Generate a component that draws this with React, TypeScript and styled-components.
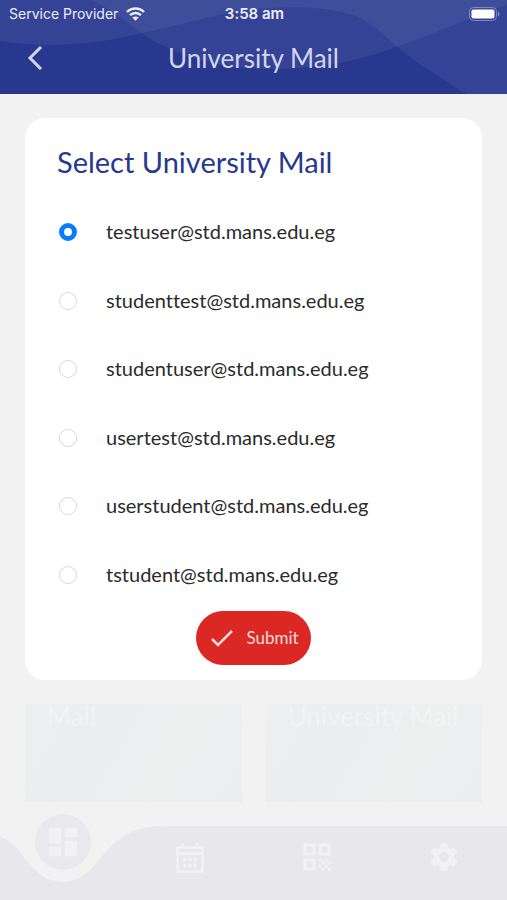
import React, { useState } from "react";
import styled, { createGlobalStyle } from "styled-components";
import { MdDashboard, MdQrCode, MdSettings } from "react-icons/md";

const GlobalStyle = createGlobalStyle`
  * { box-sizing: border-box; }
  body { margin: 0; background: #f2f2f2; font-family: Lato, "Open Sans", sans-serif; }
  button { font-family: inherit; border: 0; padding: 0; background: none; cursor: pointer; }
`;

const Screen = styled.div`
  min-height: 100vh;
  display: flex;
  flex-direction: column;
  background: #f2f2f2;
  font-variant-ligatures: none;
`;

const Header = styled.header`
  position: relative;
  height: 94px;
  background: #28388f;
  color: #d3d6ea;
  overflow: hidden;
`;

const Waves = styled.svg`
  position: absolute;
  inset: 0;
  width: 100%;
  height: 100%;
`;

const StatusBar = styled.div`
  position: relative;
  display: grid;
  grid-template-columns: 1fr auto 1fr;
  align-items: center;
  height: 28px;
  padding: 0 7px 0 9px;
  color: #eceef8;
  font-family: Inter, sans-serif;
  line-height: 20px;
`;

const Carrier = styled.div`
  display: flex;
  align-items: center;
  gap: 8px;
  font-size: 14px;
  white-space: nowrap;
`;

const Time = styled.time`
  font-size: 15px;
  font-weight: 600;
`;

const BatteryIcon = styled.svg`
  justify-self: end;
`;

const TitleBar = styled.div`
  position: relative;
  display: grid;
  grid-template-columns: 50px 1fr 50px;
  align-items: center;
  height: 60px;
  padding: 0 10px;
`;

const BackButton = styled.button`
  display: flex;
  align-items: center;
  justify-content: center;
  height: 48px;
  color: inherit;
`;

const PageTitle = styled.h1`
  margin: 0;
  text-align: center;
  font-size: 26px;
  line-height: 32px;
  font-weight: 400;
`;

const Main = styled.main`
  flex: 1;
  display: flex;
  flex-direction: column;
  gap: 24px;
  padding: 24px 25px;
`;

const Card = styled.form`
  display: flex;
  flex-direction: column;
  padding: 24px 32px 15px;
  border-radius: 20px;
  background: #fff;
`;

const CardTitle = styled.h2`
  margin: 0 0 16px;
  color: #28388f;
  font-size: 29px;
  line-height: 40px;
  font-weight: 400;
`;

const Options = styled.fieldset`
  margin: 0;
  padding: 0;
  border: 0;
`;

const Option = styled.label`
  display: flex;
  align-items: center;
  gap: 29px;
  height: 68px;
  color: #2b2b2b;
  font-size: 20px;
  line-height: 28px;
  cursor: pointer;
  &:nth-child(even) { height: 69px; }
`;

const OptionText = styled.span`
  padding-bottom: 2px;
`;

const Radio = styled.input`
  appearance: none;
  flex: none;
  width: 18px;
  height: 18px;
  margin: 0 0 0 2px;
  border: 1px solid #d9d9d9;
  border-radius: 50%;
  background: #fff;
  &:checked { border: 5px solid #0a7aff; }
`;

const SubmitButton = styled.button`
  align-self: center;
  display: flex;
  align-items: center;
  gap: 12px;
  height: 54px;
  margin-top: 2px;
  padding: 0 12px 0 14px;
  border-radius: 27px;
  background: #dc2825;
  color: #fbdcda;
  font-size: 17px;
  line-height: 24px;
`;

const Tiles = styled.div`
  display: grid;
  grid-template-columns: 1fr 1fr;
  gap: 24px;
`;

const Tile = styled.section`
  min-height: 98px;
  padding: 0 22px;
  background: linear-gradient(120deg, #eeefef, #ecedef 30%, #eeefef 65%, #ebeef0);
  color: #f2f3f3;
  font-size: 26px;
  line-height: 24px;
  white-space: nowrap;
`;

const NavBar = styled.nav`
  position: relative;
  display: grid;
  grid-template-columns: repeat(4, 1fr);
  height: 74px;
`;

const NavShape = styled.svg`
  position: absolute;
  left: 0;
  bottom: 0;
  width: 100%;
  height: 74px;
`;

const NavButton = styled.button<{ $active?: boolean }>`
  position: relative;
  display: flex;
  align-items: center;
  justify-content: center;
  justify-self: center;
  width: 56px;
  height: 56px;
  margin-top: ${(p) => (p.$active ? "-12px" : "3px")};
  border-radius: 50%;
  background: ${(p) => (p.$active ? "#e9e9ed" : "transparent")};
  color: #f2f2f5;
`;

const MAILS = [
  "testuser@std.mans.edu.eg",
  "studenttest@std.mans.edu.eg",
  "studentuser@std.mans.edu.eg",
  "usertest@std.mans.edu.eg",
  "userstudent@std.mans.edu.eg",
  "tstudent@std.mans.edu.eg",
];

function Wifi() {
  return (
    <svg width="19" height="14" viewBox="0 0 19 14" fill="none" stroke="currentColor" strokeWidth="2.4" aria-hidden="true">
      <path d="M1 5C5.6 .3 13.4 .3 18 5" />
      <path d="M4 8.2c3.2-3 7.8-3 11 0" />
      <path d="M9.5 13.7 6.4 10.6c1.8-1.6 4.4-1.6 6.2 0z" fill="currentColor" stroke="none" />
    </svg>
  );
}

function Battery() {
  return (
    <BatteryIcon width="31" height="14" viewBox="0 0 31 14" aria-label="Battery full">
      <rect x=".5" y=".5" width="27" height="13" rx="4" fill="none" stroke="#7f88bf" />
      <rect x="2.5" y="2.5" width="23" height="9" rx="2" fill="#fff" />
      <path d="M29 4.5c2 .8 2 4.2 0 5z" fill="#7f88bf" />
    </BatteryIcon>
  );
}

function Calendar() {
  return (
    <svg width="28" height="31" viewBox="0 0 28 31" fill="none" stroke="currentColor" strokeWidth="2.5" aria-hidden="true">
      <path d="M1.5 5.5h25v24h-25zM1.5 11.5h25M6.5 1v5M21.5 1v5" />
      <path d="M7 17.5h14M7 23.5h14" strokeWidth="3.5" strokeDasharray="3.5 1.75" />
    </svg>
  );
}

export default function App() {
  const [selected, setSelected] = useState(MAILS[0]);
  return (
    <Screen>
      <GlobalStyle />
      <Header>
        <Waves viewBox="0 0 507 94" preserveAspectRatio="none" aria-hidden="true">
          <g fill="#fff" fillOpacity=".06">
            <path d="M0 41C50 49 98 44 143 33C166 28 188 22 210 17C250 7 312 2 353 15C372 22 382 33 396 46C411 58 424 68 440 77C450 84 458 89 466 94H507V0H0Z" />
            <path d="M91 0C112 10 127 22 143 34C152 41 160 44 170 48C220 74 285 72 346 62C364 58 380 53 396 47C420 39 443 29 466 20C480 15 493 10 507 5V0Z" />
          </g>
        </Waves>
        <StatusBar>
          <Carrier>Service Provider <Wifi /></Carrier>
          <Time>3:58 am</Time>
          <Battery />
        </StatusBar>
        <TitleBar>
          <BackButton type="button" aria-label="Back">
            <svg width="16" height="24" viewBox="0 0 16 24" fill="none" stroke="currentColor" strokeWidth="3">
              <path d="M14 1 3 12l11 11" />
            </svg>
          </BackButton>
          <PageTitle>University Mail</PageTitle>
        </TitleBar>
      </Header>
      <Main>
        <Card onSubmit={(e) => e.preventDefault()}>
          <CardTitle id="mail-heading">Select University Mail</CardTitle>
          <Options aria-labelledby="mail-heading">
            {MAILS.map((mail) => (
              <Option key={mail}>
                <Radio type="radio" name="mail" value={mail} checked={selected === mail} onChange={() => setSelected(mail)} />
                <OptionText>{mail}</OptionText>
              </Option>
            ))}
          </Options>
          <SubmitButton type="submit">
            <svg width="24" height="20" viewBox="0 0 24 20" fill="none" stroke="currentColor" strokeWidth="2.5" aria-hidden="true">
              <path d="m2 11 6 6L22 3" />
            </svg>
            Submit
          </SubmitButton>
        </Card>
        <Tiles>
          <Tile>Mail</Tile>
          <Tile>University Mail</Tile>
        </Tiles>
      </Main>
      <NavBar>
        <NavShape viewBox="0 0 507 74" preserveAspectRatio="none" aria-hidden="true">
          <path d="M0 11C24 17 28 56 64 56C102 56 100 0 163 0H507V74H0Z" fill="#e8e8ec" />
        </NavShape>
        <NavButton $active type="button" aria-label="Dashboard"><MdDashboard size={38} /></NavButton>
        <NavButton type="button" aria-label="Calendar"><Calendar /></NavButton>
        <NavButton type="button" aria-label="QR code"><MdQrCode size={36} /></NavButton>
        <NavButton type="button" aria-label="Settings"><MdSettings size={34} /></NavButton>
      </NavBar>
    </Screen>
  );
}
